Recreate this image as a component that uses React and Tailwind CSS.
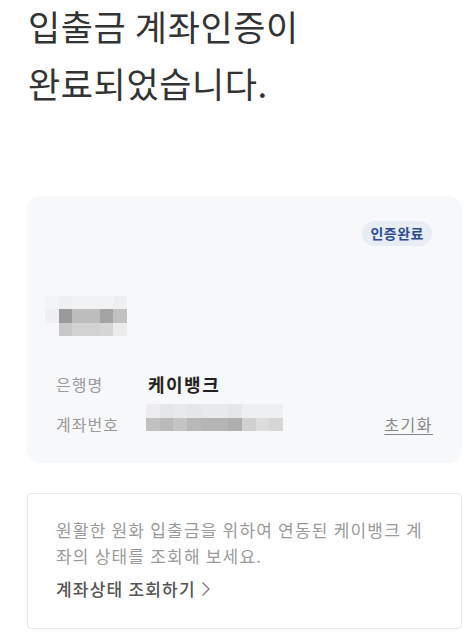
const font = { fontFamily: '"Noto Sans CJK KR", "Noto Sans", sans-serif' };

const nameBlur = [
  ["bg-[#f3f4f6]", "bg-[#eeeff1]", "bg-[#f1f2f4]", "bg-[#f1f2f4]", "bg-[#f1f2f4]", "bg-[#eeeff1]"],
  ["bg-[#eff0f2]", "bg-[#9a9a9a]", "bg-[#bdbdbd]", "bg-[#bdbdbd]", "bg-[#a4a4a4]", "bg-[#c1c1c1]"],
  ["bg-transparent", "bg-[#c8c8c8]", "bg-[#d2d2d2]", "bg-[#d2d2d2]", "bg-[#d6d6d6]", "bg-[#ebebec]"],
];

const numberBlur = [
  ["bg-[#ededef]", "bg-[#e5e6e8]", "bg-[#e8e9eb]", "bg-[#e5e6e8]", "bg-[#e8e9eb]", "bg-[#e8e9eb]", "bg-[#e5e6e8]", "bg-[#eeeff1]", "bg-[#eeeff1]", "bg-[#eeeff1]"],
  ["bg-[#c1c1c1]", "bg-[#b9bab9]", "bg-[#c4c4c4]", "bg-[#b8b8b8]", "bg-[#b4b5b4]", "bg-[#b5b5b5]", "bg-[#aeaeae]", "bg-[#d1d1d1]", "bg-[#dddddd]", "bg-[#d6d6d6]"],
];

function Mosaic({ rows, cell = "w-[13.7px] h-[13.4px]" }) {
  return (
    <div className="flex flex-col">
      {rows.map((row, i) => (
        <div key={i} className="flex">
          {row.map((c, j) => (
            <div key={j} className={`${cell} ${c}`} />
          ))}
        </div>
      ))}
    </div>
  );
}

export default function App() {
  return (
    <div className="min-h-screen bg-white pl-[27px] pr-[7px]" style={font}>
      <h1 className="-mt-[3px] pl-[1px] text-[35px] leading-[57px] font-normal text-[#333] tracking-[0.6px]">
        입출금 계좌인증이
        <br />
        완료되었습니다.
      </h1>

      <div className="mt-[85px] rounded-[14px] bg-[#f7f8fa] pt-[25px] pr-[30px] pb-[27px] pl-[18px] flex flex-col">
        <span className="self-end h-[25px] rounded-full bg-[#e8ecf5] px-[8px] text-[14px] leading-[25px] font-bold text-[#2b4c95] tracking-[0.5px]">
          인증완료
        </span>

        <div className="mt-[50px]">
          <Mosaic rows={nameBlur} />
        </div>

        <div className="mt-[36px] pl-[11px] flex items-center h-6">
          <span className="w-[92px] text-[16px] text-[#999] tracking-[1px]">은행명</span>
          <span className="text-[18px] font-bold text-[#222] tracking-[1.5px]">케이뱅크</span>
        </div>

        <div className="mt-[8px] pl-[11px] flex items-end">
          <span className="w-[90px] text-[16px] leading-6 text-[#999] tracking-[1px]">계좌번호</span>
          <div className="mb-[5px]">
            <Mosaic rows={numberBlur} />
          </div>
          <span className="ml-auto -mr-[1px] text-[16px] leading-6 text-[#888] tracking-[1.5px] underline underline-offset-[3px]">초기화</span>
        </div>
      </div>

      <div className="mt-[30px] rounded-[4px] border border-[#e6e6e6] pt-[23px] pb-[26px] pl-[28px] pr-[10px]">
        <p className="text-[17px] leading-[26px] text-[#9a9a9a] whitespace-nowrap tracking-[1.2px]">
          원활한 원화 입출금을 위하여 연동된 케이뱅크 계
          <br />
          좌의 상태를 조회해 보세요.
        </p>
        <button className="mt-[7px] flex items-center gap-[5px] text-[17px] leading-[26px] font-medium text-[#555] tracking-[1.2px]">
          계좌상태 조회하기
          <svg width="10" height="16" viewBox="0 0 10 16" fill="none">
            <path d="M1.5 1.5 L8 8 L1.5 14.5" stroke="#777" strokeWidth="1.2" />
          </svg>
        </button>
      </div>
    </div>
  );
}
